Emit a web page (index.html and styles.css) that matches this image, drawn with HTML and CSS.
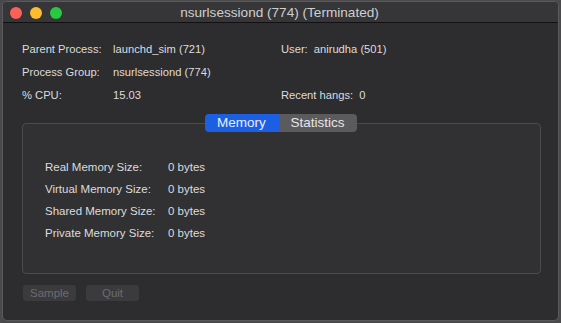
FILE: index.html
```html
<!DOCTYPE html>
<html>
<head>
<meta charset="utf-8">
<link rel="stylesheet" href="styles.css">
</head>
<body>
<div class="window">
  <div class="titlebar">
    <div class="lights">
      <span class="light red"></span>
      <span class="light yellow"></span>
      <span class="light green"></span>
    </div>
    <div class="title">nsurlsessiond (774) (Terminated)</div>
  </div>
  <div class="content">
    <div class="info">
      <div class="left">
        <div class="row"><span class="lbl">Parent Process:</span><span>launchd_sim (721)</span></div>
        <div class="row"><span class="lbl">Process Group:</span><span>nsurlsessiond (774)</span></div>
        <div class="row"><span class="lbl">% CPU:</span><span>15.03</span></div>
      </div>
      <div class="right">
        <div class="row"><span>User:</span><span class="val">anirudha (501)</span></div>
        <div class="row"></div>
        <div class="row"><span>Recent hangs:</span><span class="val">0</span></div>
      </div>
    </div>
    <div class="group">
      <div class="tabs">
        <span class="seg active">Memory</span><span class="seg">Statistics</span>
      </div>
      <div class="box">
        <div class="mrow"><span class="mlbl">Real Memory Size:</span><span>0 bytes</span></div>
        <div class="mrow"><span class="mlbl">Virtual Memory Size:</span><span>0 bytes</span></div>
        <div class="mrow"><span class="mlbl">Shared Memory Size:</span><span>0 bytes</span></div>
        <div class="mrow"><span class="mlbl">Private Memory Size:</span><span>0 bytes</span></div>
      </div>
    </div>
    <div class="buttons">
      <span class="btn sample">Sample</span>
      <span class="btn quit">Quit</span>
    </div>
  </div>
</div>
</body>
</html>
```
FILE: styles.css
```css
html, body {
  margin: 0;
  padding: 0;
}
body {
  width: 561px;
  height: 323px;
  background: #4a4a4c;
  font-family: "Liberation Sans", Arial, sans-serif;
  font-size: 11.2px;
  color: #dcdcdd;
  overflow: hidden;
}
.window {
  margin: 1px 0 0 2px;
  width: 555px;
  height: 318px;
  border: 1px solid #5a5a5c;
  border-radius: 5px;
  background: #2d2d2f;
  overflow: hidden;
  display: flex;
  flex-direction: column;
}
.titlebar {
  height: 20px;
  flex: none;
  background: #363638;
  border-bottom: 1px solid #111113;
  display: flex;
  align-items: center;
  position: relative;
}
.lights {
  display: flex;
  gap: 8px;
  padding-left: 7px;
}
.light {
  width: 12px;
  height: 12px;
  border-radius: 50%;
  display: block;
  margin-top: 2px;
}
.red { background: #fe5f57; }
.yellow { background: #febc2e; }
.green { background: #28c840; }
.title {
  position: absolute;
  left: 0;
  right: 0;
  top: 3px;
  text-align: center;
  font-size: 13.6px;
  color: #cfcfd0;
  padding-right: 2px;
}
.content {
  flex: 1;
  padding: 15px 0 0 19px;
}
.info {
  display: flex;
}
.left {
  width: 259px;
}
.row {
  height: 23px;
  line-height: 23px;
  display: flex;
}
.lbl {
  width: 91px;
}
.val {
  margin-left: 6px;
}
.group {
  margin-top: 7px;
  width: 519px;
  display: flex;
  flex-direction: column;
}
.tabs {
  align-self: center;
  display: flex;
  height: 18px;
  margin-bottom: -9px;
  margin-right: 2px;
  position: relative;
  z-index: 1;
  border-radius: 4px;
  overflow: hidden;
  font-size: 13.5px;
  line-height: 18px;
}
.seg {
  display: block;
  text-align: center;
}
.seg.active {
  width: 74px;
  background: #1d5fe3;
  color: #e8eefc;
}
.seg:not(.active) {
  width: 78px;
  background: #5b5b5d;
  color: #e6e6e7;
}
.box {
  border: 1px solid #4b4b4d;
  border-radius: 4px;
  background: #313133;
  padding: 32px 0 0 22px;
  box-sizing: border-box;
  height: 151px;
  font-size: 11.5px;
}
.mrow {
  height: 22px;
  line-height: 22px;
  display: flex;
}
.mlbl {
  width: 123px;
}
.buttons {
  display: flex;
  gap: 10px;
  margin-top: 11px;
  padding-left: 1px;
}
.btn {
  display: block;
  height: 16px;
  line-height: 16px;
  width: 53px;
  text-align: center;
  border-radius: 3px;
  background: #3b3b3d;
  color: #6c6c6e;
  font-size: 11.5px;
}
```
